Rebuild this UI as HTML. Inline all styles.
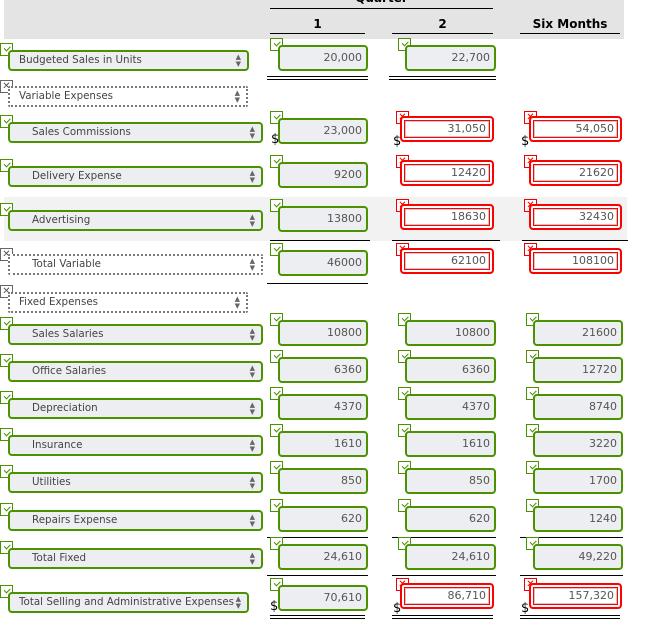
<!DOCTYPE html><html><head><style>
body{margin:0;width:647px;height:623px;background:#fff;position:relative;overflow:hidden;font-family:"DejaVu Sans","Liberation Sans",sans-serif;font-size:10px;color:#444}
.a{position:absolute}
.hd{left:4px;top:0;width:620px;height:39px;background:#e4e4e4}
.ln{position:absolute;height:0;border-top:1px solid #000}
.dl{position:absolute;height:2px;border-top:1px solid #000;border-bottom:1px solid #000}
.th{position:absolute;font-weight:bold;font-size:12px;color:#000;text-align:center}
.sel{position:absolute;left:8px;height:17px;background:#eceef1;border:2px solid #4a9200;border-radius:4px;line-height:17px;box-sizing:content-box;font-size:10.3px;color:#444}
.sel.d{background:#fff;border:2px dotted #777;border-radius:2px}
.sel span{position:absolute;left:22px;white-space:nowrap}
.sel.n span{left:9px}
.sel i{position:absolute;right:6px;font-style:normal;font-size:7px;line-height:7px;top:2px;color:#666}
.in{position:absolute;height:22px;background:#eceef1;border:2px solid #4a9200;border-radius:4px;text-align:right;line-height:22px;padding-right:4px;box-sizing:content-box;font-size:11px;color:#555}
.in.r{background:#fff;border:2px solid #f00;box-shadow:inset 0 0 0 2px #fff,inset 0 0 0 3px #f00,inset 0 0 0 4px #ccc;height:22px;line-height:22px;padding-right:6px}
.ck{position:absolute;width:11px;height:11px;border:1.5px solid #4a9200;background:#fff;color:#4a9200;font-size:10px;line-height:11px;text-align:center;font-weight:bold}
.ck:empty::after{content:"";position:absolute;left:3px;top:2px;width:5px;height:2.5px;border-left:1.5px solid #4a9200;border-bottom:1.5px solid #4a9200;transform:rotate(-45deg)}
.ck.x{border-color:#e00;color:#e00}
.ck.g{border-color:#666;color:#555}
.dol{position:absolute;font-size:13px;color:#000}
</style></head><body>
<div class="a hd"></div>
<div class="th" style="left:270px;top:-9px;width:223px">Quarter</div>
<div class="ln" style="left:270px;top:8px;width:223px"></div>
<div class="th" style="left:270px;top:17px;width:95px">1</div>
<div class="th" style="left:392px;top:17px;width:101px">2</div>
<div class="th" style="left:520px;top:17px;width:100px">Six Months</div>
<div class="ln" style="left:270px;top:33px;width:95px"></div>
<div class="ln" style="left:392px;top:33px;width:101px"></div>
<div class="ln" style="left:520px;top:33px;width:100px"></div>
<div class="a" style="left:4px;top:197px;width:623px;height:44px;background:#f2f2f2"></div>

<div class="ck" style="left:0;top:43px"></div>
<div class="sel n" style="top:50px;width:237px"><span>Budgeted Sales in Units</span><i>▲<br>▼</i></div>
<div class="ck" style="left:270px;top:38px"></div>
<div class="in" style="left:278px;top:45px;width:82px">20,000</div>
<div class="ck" style="left:398px;top:38px"></div>
<div class="in" style="left:405px;top:45px;width:83px">22,700</div>
<div class="dl" style="left:267px;top:76px;width:101px"></div>
<div class="dl" style="left:389px;top:76px;width:107px"></div>

<div class="ck g" style="left:0;top:80px">✕</div>
<div class="sel d n" style="top:86px;width:236px"><span>Variable Expenses</span><i>▲<br>▼</i></div>

<div class="ck" style="left:0;top:115px"></div>
<div class="sel" style="top:122px;width:251px"><span>Sales Commissions</span><i>▲<br>▼</i></div>
<div class="ck" style="left:270px;top:111px"></div>
<div class="in" style="left:278px;top:118px;width:82px">23,000</div>
<div class="dol" style="left:271px;top:132px">$</div>
<div class="ck x" style="left:396px;top:111px">✕</div>
<div class="in r" style="left:400px;top:116px;width:84px">31,050</div>
<div class="dol" style="left:393px;top:134px">$</div>
<div class="ck x" style="left:524px;top:111px">✕</div>
<div class="in r" style="left:529px;top:116px;width:83px">54,050</div>
<div class="dol" style="left:521px;top:134px">$</div>

<div class="ck" style="left:0;top:159px"></div>
<div class="sel" style="top:166px;width:251px"><span>Delivery Expense</span><i>▲<br>▼</i></div>
<div class="ck" style="left:270px;top:155px"></div>
<div class="in" style="left:278px;top:162px;width:82px">9200</div>
<div class="ck x" style="left:396px;top:155px">✕</div>
<div class="in r" style="left:400px;top:160px;width:84px">12420</div>
<div class="ck x" style="left:524px;top:155px">✕</div>
<div class="in r" style="left:529px;top:160px;width:83px">21620</div>

<div class="ck" style="left:0;top:203px"></div>
<div class="sel" style="top:210px;width:251px"><span>Advertising</span><i>▲<br>▼</i></div>
<div class="ck" style="left:270px;top:199px"></div>
<div class="in" style="left:278px;top:206px;width:82px">13800</div>
<div class="ck x" style="left:396px;top:199px">✕</div>
<div class="in r" style="left:400px;top:204px;width:84px">18630</div>
<div class="ck x" style="left:524px;top:199px">✕</div>
<div class="in r" style="left:529px;top:204px;width:83px">32430</div>
<div class="ln" style="left:270px;top:240px;width:100px"></div>
<div class="ln" style="left:392px;top:240px;width:108px"></div>
<div class="ln" style="left:522px;top:240px;width:106px"></div>

<div class="ck g" style="left:0;top:248px">✕</div>
<div class="sel d" style="top:254px;width:251px"><span>Total Variable</span><i>▲<br>▼</i></div>
<div class="ck" style="left:270px;top:243px"></div>
<div class="in" style="left:278px;top:250px;width:82px">46000</div>
<div class="ck x" style="left:396px;top:243px">✕</div>
<div class="in r" style="left:400px;top:248px;width:84px">62100</div>
<div class="ck x" style="left:524px;top:243px">✕</div>
<div class="in r" style="left:529px;top:248px;width:83px">108100</div>
<div class="ln" style="left:267px;top:283px;width:101px"></div>

<div class="ck g" style="left:0;top:285px">✕</div>
<div class="sel d n" style="top:292px;width:236px"><span>Fixed Expenses</span><i>▲<br>▼</i></div>

<div class="ck" style="left:0;top:317px"></div>
<div class="sel" style="top:324px;width:251px"><span>Sales Salaries</span><i>▲<br>▼</i></div>
<div class="ck" style="left:270px;top:313px"></div><div class="in" style="left:278px;top:320px;width:82px">10800</div>
<div class="ck" style="left:398px;top:313px"></div><div class="in" style="left:405px;top:320px;width:83px">10800</div>
<div class="ck" style="left:526px;top:313px"></div><div class="in" style="left:533px;top:320px;width:82px">21600</div>

<div class="ck" style="left:0;top:354px"></div>
<div class="sel" style="top:361px;width:251px"><span>Office Salaries</span><i>▲<br>▼</i></div>
<div class="ck" style="left:270px;top:350px"></div><div class="in" style="left:278px;top:357px;width:82px">6360</div>
<div class="ck" style="left:398px;top:350px"></div><div class="in" style="left:405px;top:357px;width:83px">6360</div>
<div class="ck" style="left:526px;top:350px"></div><div class="in" style="left:533px;top:357px;width:82px">12720</div>

<div class="ck" style="left:0;top:391px"></div>
<div class="sel" style="top:398px;width:251px"><span>Depreciation</span><i>▲<br>▼</i></div>
<div class="ck" style="left:270px;top:387px"></div><div class="in" style="left:278px;top:394px;width:82px">4370</div>
<div class="ck" style="left:398px;top:387px"></div><div class="in" style="left:405px;top:394px;width:83px">4370</div>
<div class="ck" style="left:526px;top:387px"></div><div class="in" style="left:533px;top:394px;width:82px">8740</div>

<div class="ck" style="left:0;top:428px"></div>
<div class="sel" style="top:435px;width:251px"><span>Insurance</span><i>▲<br>▼</i></div>
<div class="ck" style="left:270px;top:424px"></div><div class="in" style="left:278px;top:431px;width:82px">1610</div>
<div class="ck" style="left:398px;top:424px"></div><div class="in" style="left:405px;top:431px;width:83px">1610</div>
<div class="ck" style="left:526px;top:424px"></div><div class="in" style="left:533px;top:431px;width:82px">3220</div>

<div class="ck" style="left:0;top:465px"></div>
<div class="sel" style="top:472px;width:251px"><span>Utilities</span><i>▲<br>▼</i></div>
<div class="ck" style="left:270px;top:461px"></div><div class="in" style="left:278px;top:468px;width:82px">850</div>
<div class="ck" style="left:398px;top:461px"></div><div class="in" style="left:405px;top:468px;width:83px">850</div>
<div class="ck" style="left:526px;top:461px"></div><div class="in" style="left:533px;top:468px;width:82px">1700</div>

<div class="ck" style="left:0;top:503px"></div>
<div class="sel" style="top:510px;width:251px"><span>Repairs Expense</span><i>▲<br>▼</i></div>
<div class="ck" style="left:270px;top:499px"></div><div class="in" style="left:278px;top:506px;width:82px">620</div>
<div class="ck" style="left:398px;top:499px"></div><div class="in" style="left:405px;top:506px;width:83px">620</div>
<div class="ck" style="left:526px;top:499px"></div><div class="in" style="left:533px;top:506px;width:82px">1240</div>
<div class="ln" style="left:267px;top:537px;width:101px"></div>
<div class="ln" style="left:392px;top:537px;width:104px"></div>
<div class="ln" style="left:520px;top:537px;width:103px"></div>

<div class="ck" style="left:0;top:541px"></div>
<div class="sel" style="top:548px;width:251px"><span>Total Fixed</span><i>▲<br>▼</i></div>
<div class="ck" style="left:270px;top:537px"></div><div class="in" style="left:278px;top:544px;width:82px">24,610</div>
<div class="ck" style="left:398px;top:537px"></div><div class="in" style="left:405px;top:544px;width:83px">24,610</div>
<div class="ck" style="left:526px;top:537px"></div><div class="in" style="left:533px;top:544px;width:82px">49,220</div>
<div class="ln" style="left:267px;top:575px;width:101px"></div>
<div class="ln" style="left:392px;top:575px;width:104px"></div>
<div class="ln" style="left:520px;top:575px;width:103px"></div>

<div class="ck" style="left:0;top:585px"></div>
<div class="sel n" style="top:592px;width:237px"><span>Total Selling and Administrative Expenses</span><i>▲<br>▼</i></div>
<div class="ck" style="left:270px;top:578px"></div><div class="in" style="left:278px;top:585px;width:82px">70,610</div>
<div class="dol" style="left:270px;top:599px">$</div>
<div class="ck x" style="left:396px;top:578px">✕</div><div class="in r" style="left:400px;top:583px;width:84px">86,710</div>
<div class="dol" style="left:393px;top:601px">$</div>
<div class="ck x" style="left:524px;top:578px">✕</div><div class="in r" style="left:529px;top:583px;width:83px">157,320</div>
<div class="dol" style="left:521px;top:601px">$</div>
<div class="dl" style="left:270px;top:615px;width:95px"></div>
<div class="dl" style="left:392px;top:615px;width:101px"></div>
<div class="dl" style="left:520px;top:615px;width:100px"></div>
</body></html>
